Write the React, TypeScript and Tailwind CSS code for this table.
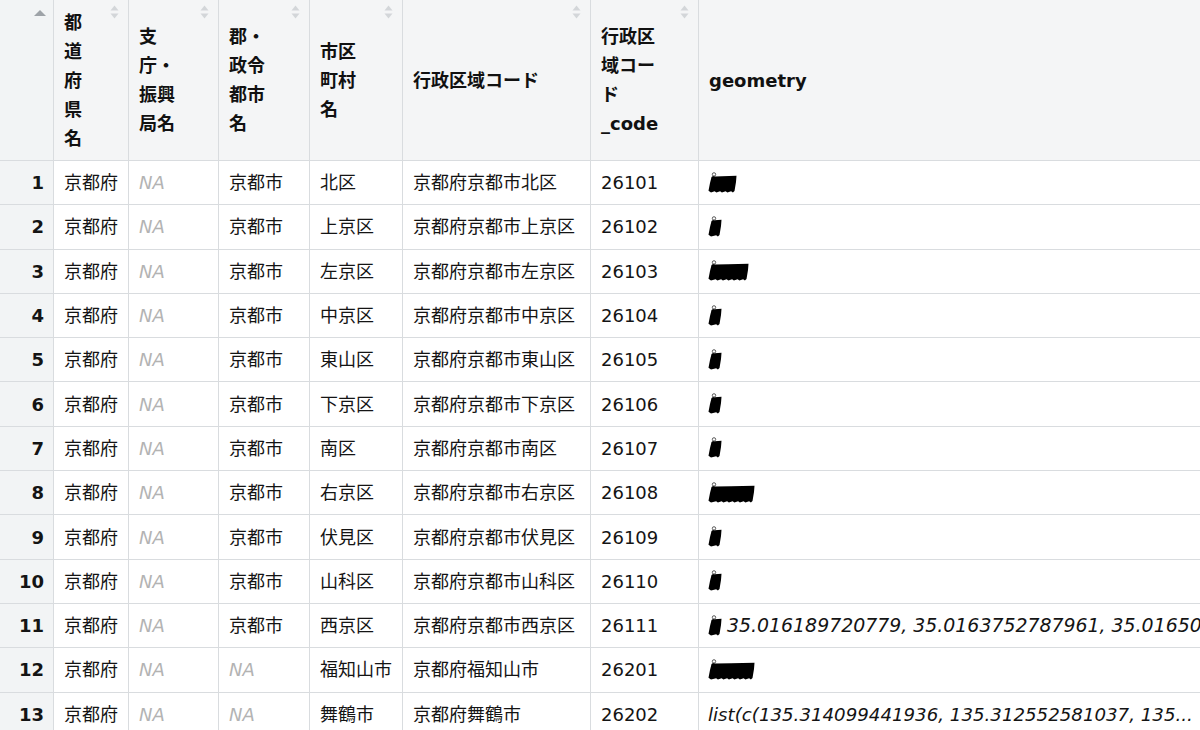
import React from "react";

// RStudio-style data viewer for a Kyoto municipalities table.

const GRID =
  "grid grid-cols-[54px_75px_90px_91px_93px_188px_108px_minmax(0,1fr)]";

const FONT = {
  fontFamily: '"DejaVu Sans", "Noto Sans CJK JP", sans-serif',
};

type Row = {
  city: string | null;
  ward: string;
  full: string;
  code: string;
  blob?: number;
  extra?: string;
  text?: string;
};

const rows: Row[] = [
  { city: "京都市", ward: "北区", full: "京都府京都市北区", code: "26101", blob: 28 },
  { city: "京都市", ward: "上京区", full: "京都府京都市上京区", code: "26102", blob: 13 },
  { city: "京都市", ward: "左京区", full: "京都府京都市左京区", code: "26103", blob: 40 },
  { city: "京都市", ward: "中京区", full: "京都府京都市中京区", code: "26104", blob: 13 },
  { city: "京都市", ward: "東山区", full: "京都府京都市東山区", code: "26105", blob: 13 },
  { city: "京都市", ward: "下京区", full: "京都府京都市下京区", code: "26106", blob: 13 },
  { city: "京都市", ward: "南区", full: "京都府京都市南区", code: "26107", blob: 13 },
  { city: "京都市", ward: "右京区", full: "京都府京都市右京区", code: "26108", blob: 46 },
  { city: "京都市", ward: "伏見区", full: "京都府京都市伏見区", code: "26109", blob: 13 },
  { city: "京都市", ward: "山科区", full: "京都府京都市山科区", code: "26110", blob: 13 },
  {
    city: "京都市",
    ward: "西京区",
    full: "京都府京都市西京区",
    code: "26111",
    blob: 13,
    extra: "35.016189720779, 35.0163752787961, 35.01650",
  },
  { city: null, ward: "福知山市", full: "京都府福知山市", code: "26201", blob: 46 },
  {
    city: null,
    ward: "舞鶴市",
    full: "京都府舞鶴市",
    code: "26202",
    text: "list(c(135.314099441936, 135.312552581037, 135...",
  },
];

const headers: { lines: string[]; sort?: boolean }[] = [
  { lines: ["都", "道", "府", "県", "名"], sort: true },
  { lines: ["支", "庁・", "振興", "局名"], sort: true },
  { lines: ["郡・", "政令", "都市", "名"], sort: true },
  { lines: ["市区", "町村", "名"], sort: true },
  { lines: ["行政区域コード"], sort: true },
  { lines: ["行政区", "域コー", "ド", "_code"], sort: true },
  { lines: ["geometry"] },
];

function SortIcon() {
  return (
    <svg
      width="9"
      height="14"
      viewBox="0 0 9 14"
      className="absolute right-[9px] top-[5px]"
    >
      <path d="M0.5 5.5 L4.5 0.5 L8.5 5.5 Z" fill="#d3d6d9" />
      <path d="M0.5 8.5 L4.5 13.5 L8.5 8.5 Z" fill="#d3d6d9" />
    </svg>
  );
}

// little black map polygon, slanted with a ragged bottom edge
function blobPath(w: number): string {
  const pts: [number, number][] = [
    [3.5, 5],
    [5, 4],
    [7.5, 4.6],
    [w * 0.5, 4.2],
    [w + 0.5, 3.8],
    [w, 10],
    [w - 1.5, 19],
  ];
  let x = w - 1.5;
  while (x > 7) {
    pts.push([x - 1.6, 20.6]);
    pts.push([x - 3.4, 19.2]);
    x -= 5.5;
  }
  pts.push([3, 20.4]);
  pts.push([0.5, 18.8]);
  pts.push([2, 11]);
  return (
    "M" + pts.map(([a, b]) => `${a.toFixed(1)} ${b.toFixed(1)}`).join(" L") + " Z"
  );
}

function Blob({ w }: { w: number }) {
  return (
    <svg width={w + 2} height="22" viewBox={`0 0 ${w + 2} 22`} className="shrink-0">
      <path d={blobPath(w)} fill="#000" />
      <circle cx="6" cy="2.4" r="1.7" fill="none" stroke="#333" strokeWidth="0.8" />
    </svg>
  );
}

function NA() {
  return <span className="italic text-[#b3b3b3]">NA</span>;
}

export default function App() {
  return (
    <div
      className="h-[730px] w-[1200px] overflow-hidden bg-white text-[18px] text-[#141414]"
      style={FONT}
    >
      {/* header */}
      <div className={`${GRID} h-[161px] border-b border-[#d9dcdf] bg-[#f4f5f6]`}>
        <div className="relative border-r border-[#d9dcdf] bg-[#f2f4f5]">
          <svg
            width="12"
            height="6"
            viewBox="0 0 12 6"
            className="absolute left-[34px] top-[10px]"
          >
            <path d="M0 6 L6 0 L12 6 Z" fill="#9ea3a8" />
          </svg>
        </div>
        {headers.map((h, i) => (
          <div
            key={i}
            className={`relative flex items-center pl-[10px] pr-[30px] font-bold leading-[29px] text-[#111] ${
              i < headers.length - 1 ? "border-r border-[#d9dcdf]" : ""
            }`}
          >
            <div className="whitespace-nowrap">
              {h.lines.map((l, j) => (
                <div key={j}>{l}</div>
              ))}
            </div>
            {h.sort && <SortIcon />}
          </div>
        ))}
      </div>

      {/* body */}
      {rows.map((r, i) => (
        <div key={i} className={`${GRID} h-[44.3px] border-b border-[#d9dcdf]`}>
          <div className="flex items-center justify-end border-r border-[#d9dcdf] bg-[#f2f4f5] pr-[9px] font-bold">
            {i + 1}
          </div>
          <div className="flex items-center border-r border-[#d9dcdf] pl-[10px]">京都府</div>
          <div className="flex items-center border-r border-[#d9dcdf] pl-[10px]">
            <NA />
          </div>
          <div className="flex items-center border-r border-[#d9dcdf] pl-[10px]">
            {r.city ?? <NA />}
          </div>
          <div className="flex items-center whitespace-nowrap border-r border-[#d9dcdf] pl-[10px]">
            {r.ward}
          </div>
          <div className="flex items-center whitespace-nowrap border-r border-[#d9dcdf] pl-[10px]">
            {r.full}
          </div>
          <div className="flex items-center border-r border-[#d9dcdf] pl-[10px]">{r.code}</div>
          <div className="flex items-center gap-[4px] overflow-hidden whitespace-nowrap pl-[9px] italic">
            {r.blob && <Blob w={r.blob} />}
            {r.extra && <span className="text-[18.9px]">{r.extra}</span>}
            {r.text && <span className="text-[18.2px]">{r.text}</span>}
          </div>
        </div>
      ))}
    </div>
  );
}
